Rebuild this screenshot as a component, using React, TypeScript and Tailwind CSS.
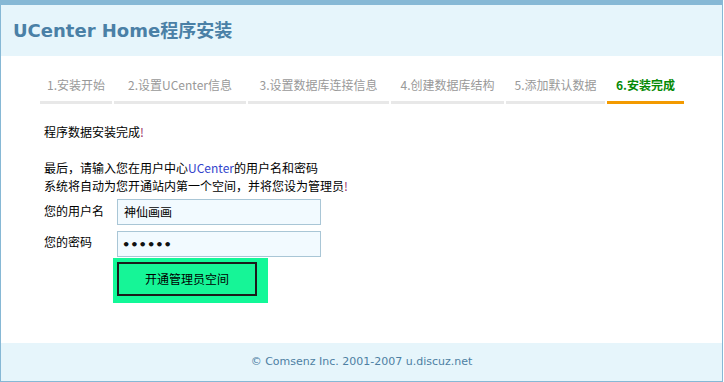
import React from "react";

const cjk = '"Noto Sans CJK SC", "DejaVu Sans", sans-serif';

const tabs = [
  { label: "1.安装开始", w: "w-[72px]" },
  { label: "2.设置UCenter信息", w: "w-[132px]" },
  { label: "3.设置数据库连接信息", w: "w-[141px]" },
  { label: "4.创建数据库结构", w: "w-[113px]" },
  { label: "5.添加默认数据", w: "w-[99px]" },
];

export default function App() {
  return (
    <div className="w-[724px] h-[382px] bg-white" style={{ fontFamily: cjk }}>
      <div className="w-[723px] h-[382px] flex flex-col border-t-[5px] border-l border-r border-b border-[#86b8d5] bg-white">
        <div className="h-[51px] bg-[#e6f5fb] flex items-center pl-[12px]">
          <h1
            className="text-[18px] font-bold text-[#4a80a6] leading-none"
            style={{ fontFamily: '"DejaVu Sans", "Noto Sans CJK SC", sans-serif' }}
          >
            UCenter Home程序安装
          </h1>
        </div>

        <div className="pt-[18px] pl-[39px] flex gap-[2px]">
          {tabs.map((t) => (
            <div
              key={t.label}
              className={`${t.w} h-[30px] border-b-[3px] border-[#e8e8e8] flex items-start justify-center pt-[3px] text-[12px] leading-[16px] text-[#999999]`}
            >
              {t.label}
            </div>
          ))}
          <div className="w-[77px] h-[30px] border-b-[3px] border-[#f39a00] flex items-start justify-center pt-[3px] text-[12px] leading-[16px] font-bold text-[#068a06]">
            6.安装完成
          </div>
        </div>

        <div className="pl-[43px] pt-[19px] text-[12px] leading-[18px] text-black">
          <p>
            程序数据安装完成<span className="text-[#993366]">!</span>
          </p>
          <p className="mt-[18px]">
            最后，请输入您在用户中心<span className="text-[#3344cc]">UCenter</span>的用户名和密码
          </p>
          <p>
            系统将自动为您开通站内第一个空间，并将您设为管理员<span className="text-[#993366]">!</span>
          </p>

          <div className="mt-[4px] flex items-center h-[26px]">
            <span className="w-[73px] -mt-[2px]">您的用户名</span>
            <div className="w-[204px] h-[26px] border border-[#a9c6d6] bg-[#f2faff] flex items-center pl-[6px] text-[12px]">
              神仙画画
            </div>
          </div>
          <div className="mt-[6px] flex items-center h-[26px]">
            <span className="w-[73px] -mt-[4px]">您的密码</span>
            <div
              className="w-[204px] h-[26px] border border-[#a9c6d6] bg-[#f2faff] flex items-center pl-[4px] pt-[2px] text-[13px] font-bold text-[#111]"
              style={{ fontFamily: '"DejaVu Sans", sans-serif' }}
            >
              ••••••
            </div>
          </div>
          <div className="ml-[69px] mt-[1px] w-[155px] h-[45px] bg-[#12f898] p-[4px] pr-[11px] pb-[7px]">
            <div className="w-full h-full border-2 border-[#1b1b1b] bg-[#16f597] flex items-center justify-center text-[12px] text-black">
              开通管理员空间
            </div>
          </div>
        </div>

        <div className="flex-1" />

        <div
          className="h-[38px] bg-[#e6f5fb] flex items-center justify-center text-[11px] text-[#4d7fa3]"
          style={{ fontFamily: '"DejaVu Sans", sans-serif' }}
        >
          © Comsenz Inc. 2001-2007 u.discuz.net
        </div>
      </div>
    </div>
  );
}
